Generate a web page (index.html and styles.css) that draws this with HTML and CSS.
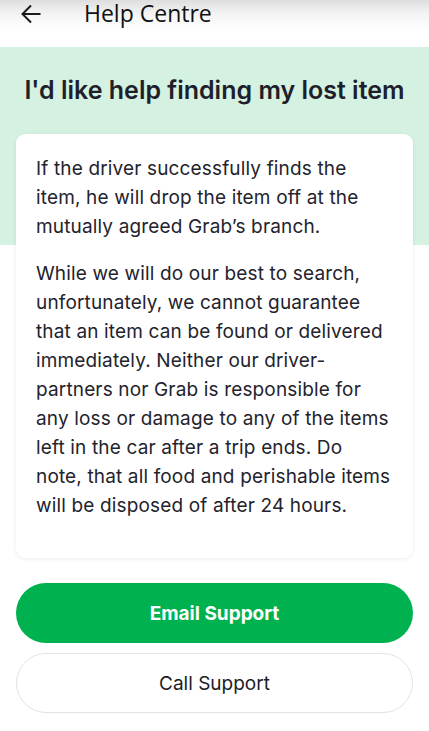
FILE: index.html
```html
<!DOCTYPE html>
<html>
<head>
<meta charset="utf-8">
<link rel="stylesheet" href="styles.css">
</head>
<body>
<header class="topbar">
  <svg class="back" width="20" height="20" viewBox="0 0 20 20"><path d="M19.5 10H2M10 1.5L1.5 10l8.5 8.5" fill="none" stroke="#1a1a1a" stroke-width="2"/></svg>
  <span class="topbar-title">Help Centre</span>
</header>
<main class="page">
  <section class="hero">
    <h1 class="hero-title">I'd like help finding my lost item</h1>
  </section>
  <div class="card">
    <p>If the driver successfully finds the item, he will drop the item off at the mutually agreed Grab’s branch.</p>
    <p>While we will do our best to search, unfortunately, we cannot guarantee that an item can be found or delivered immediately. Neither our driver-partners nor Grab is responsible for any loss or damage to any of the items left in the car after a trip ends. Do note, that all food and perishable items will be disposed of after 24 hours.</p>
  </div>
  <div class="actions">
    <button class="btn btn-primary">Email Support</button>
    <button class="btn btn-secondary">Call Support</button>
  </div>
</main>
</body>
</html>
```
FILE: styles.css
```css
* { box-sizing: border-box; }
html, body { margin: 0; padding: 0; }
body {
  width: 429px;
  height: 731px;
  overflow: hidden;
  background: #fff;
  font-family: Inter, "Noto Sans", sans-serif;
  color: #1c1c28;
}
.topbar {
  height: 47px;
  display: flex;
  align-items: flex-start;
  padding: 0 0 0 21px;
  background: linear-gradient(#dedede 0px, #f4f4f4 14px, #ffffff 30px);
}
.back { margin-top: 4px; }
.topbar-title {
  margin-left: 43px;
  font-family: "Open Sans", sans-serif;
  font-size: 23px;
  line-height: 24px;
  padding-top: 1px;
  color: #111;
}
.hero {
  background: #d5f1e1;
  height: 198px;
  padding: 28px 10px 0;
}
.hero-title {
  margin: 0;
  font-size: 25px;
  font-weight: 600;
  line-height: 30px;
  text-align: center;
  color: #1e1f2b;
}
.card {
  margin: -111px 16px 0;
  position: relative;
  background: #fff;
  border-radius: 9px;
  padding: 20px 20px 20px;
  box-shadow: 0 1px 4px rgba(0,0,0,0.08);
}
.card p {
  margin: 0 0 18px;
  font-size: 19px;
  line-height: 29px;
  letter-spacing: 0.15px;
  color: #23232d;
}
.actions {
  margin: 25px 16px 0;
  display: flex;
  flex-direction: column;
  gap: 10px;
}
.btn {
  height: 60px;
  border-radius: 30px;
  font-family: Inter, sans-serif;
  font-size: 19px;
  width: 100%;
}
.btn-primary {
  background: #00b14f;
  border: none;
  color: #fff;
  font-weight: 700;
}
.btn-secondary {
  background: #fff;
  border: 1px solid #e3e3e3;
  color: #1c1c28;
  font-weight: 400;
}
```
